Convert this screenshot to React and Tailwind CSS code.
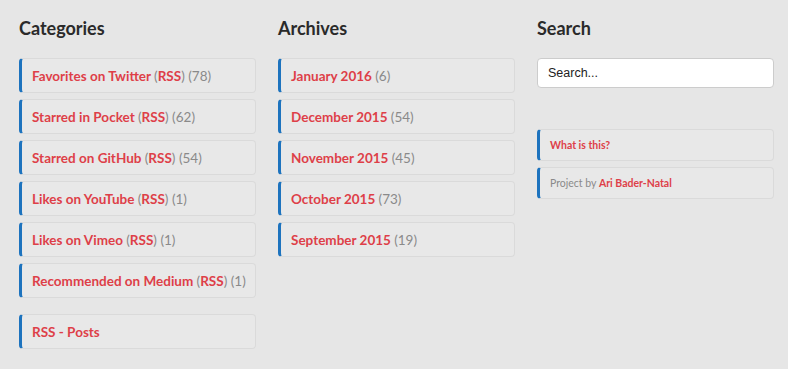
import React from "react";

const red = "text-[#de3f48]";
const cnt = "text-[#8a8a8a] font-normal";

function Box({ children, h = "h-[35px]", text = "text-[13.5px]", mt = "" }) {
  return (
    <div
      className={`${h} ${mt} flex items-center rounded-[4px] border border-[#dadada] border-l-[3px] border-l-[#1d73be] bg-[#e8e8e8] pl-[10px] pt-px ${text} font-bold ${red}`}
      style={{ fontFamily: '"Lato", "Liberation Sans", sans-serif' }}
    >
      <span>{children}</span>
    </div>
  );
}

function Heading({ children }) {
  return (
    <h2
      className="h-[38px] pt-[17px] text-[18px] font-bold leading-[22px] text-[#2a2a2a]"
      style={{ fontFamily: '"Lato", "Liberation Sans", sans-serif' }}
    >
      {children}
    </h2>
  );
}

function Cat({ name, n }) {
  return (
    <Box>
      {name} <span className={cnt}>(</span>RSS<span className={cnt}>) ({n})</span>
    </Box>
  );
}

function Arch({ name, n }) {
  return (
    <Box>
      {name} <span className={cnt}>({n})</span>
    </Box>
  );
}

export default function App() {
  return (
    <div className="h-[369px] w-[788px] bg-[#e6e6e6] pl-[19px]">
      <div className="grid grid-cols-[237px_237px_237px] gap-x-[22px]">
        <div>
          <Heading>Categories</Heading>
          <div className="mt-[20px] flex flex-col gap-[6px]">
            <Cat name="Favorites on Twitter" n="78" />
            <Cat name="Starred in Pocket" n="62" />
            <Cat name="Starred on GitHub" n="54" />
            <Cat name="Likes on YouTube" n="1" />
            <Cat name="Likes on Vimeo" n="1" />
            <Cat name="Recommended on Medium" n="1" />
          </div>
          <Box mt="mt-[16px]">RSS - Posts</Box>
        </div>
        <div>
          <Heading>Archives</Heading>
          <div className="mt-[20px] flex flex-col gap-[6px]">
            <Arch name="January 2016" n="6" />
            <Arch name="December 2015" n="54" />
            <Arch name="November 2015" n="45" />
            <Arch name="October 2015" n="73" />
            <Arch name="September 2015" n="19" />
          </div>
        </div>
        <div>
          <Heading>Search</Heading>
          <input
            type="text"
            placeholder="Search..."
            className="mt-[20px] h-[30px] w-full rounded-[4px] border border-[#cccccc] bg-white px-[10px] text-[12.5px] text-black placeholder:text-[#222]"
            style={{ fontFamily: '"Liberation Sans", Arial, sans-serif' }}
          />
          <div className="mt-[41px] flex flex-col gap-[6px]">
            <Box h="h-[32px]" text="text-[10.5px]">What is this?</Box>
            <Box h="h-[32px]" text="text-[10.5px]">
              <span className="font-normal text-[#8a8a8a]">Project by </span>Ari Bader-Natal
            </Box>
          </div>
        </div>
      </div>
    </div>
  );
}
